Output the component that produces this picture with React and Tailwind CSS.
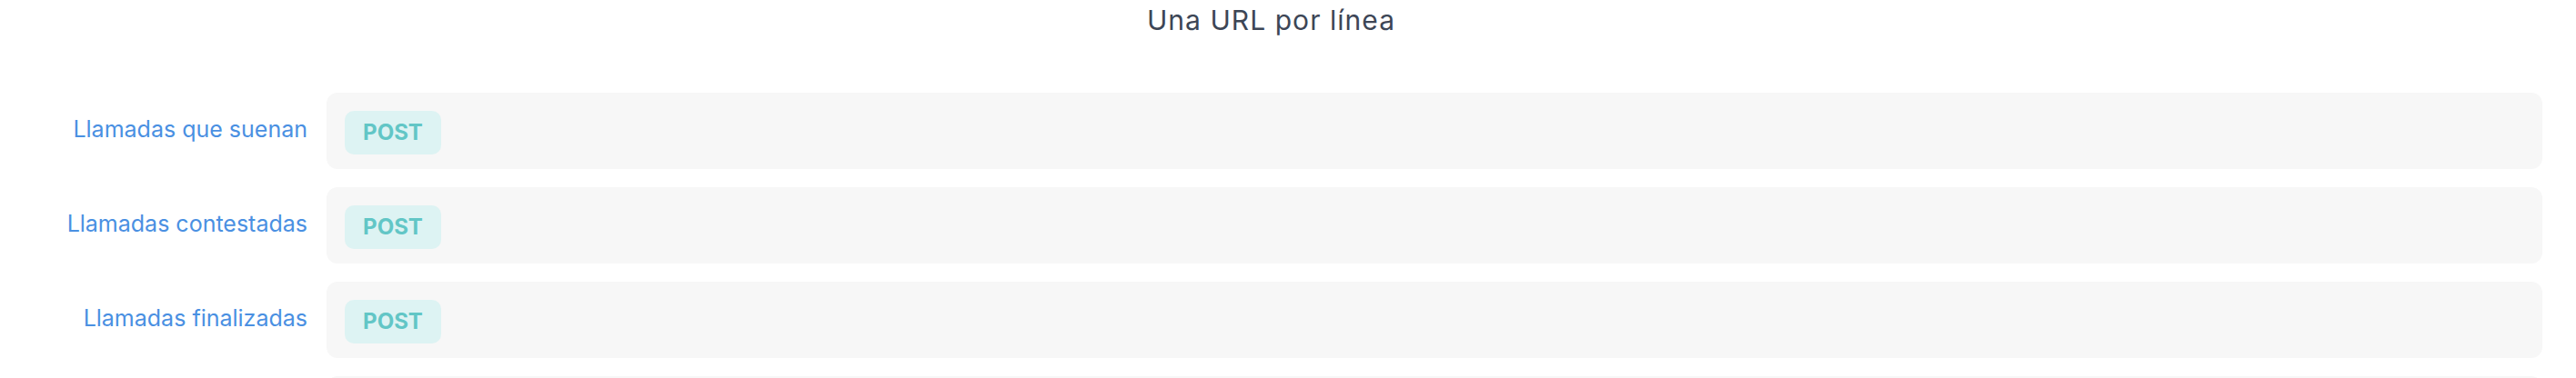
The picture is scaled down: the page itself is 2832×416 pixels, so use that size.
import React from 'react'

const hooks = [
  { label: 'Llamadas que suenan', method: 'POST' },
  { label: 'Llamadas contestadas', method: 'POST' },
  { label: 'Llamadas finalizadas', method: 'POST' }
]

function HookRow({ label, method }) {
  return (
    <div className="flex items-start gap-[21px]">
      <div className="w-[338px] shrink-0 pt-[24px] text-right text-[25px] leading-[32px] text-[#4a90e2]">
        {label}
      </div>
      <div className="flex h-[84px] flex-1 items-start rounded-[12px] bg-[#f7f7f7] pl-[20px] pt-[20px]">
        {method && (
          <span className="flex h-[48px] w-[106px] items-center justify-center rounded-[10px] bg-[#ddf3f3] text-[24px] font-bold text-[#62c6c6]">
            {method}
          </span>
        )}
      </div>
    </div>
  )
}

export default function App() {
  return (
    <div className="min-h-screen bg-white font-['Inter','Noto_Sans',sans-serif]">
      <div className="w-[2795px]">
        <h2 className="pt-[4px] text-center text-[30px] leading-[36px] font-normal tracking-[0.035em] text-[#3d4656]">
          Una URL por línea
        </h2>
        <div className="mt-[62px] flex flex-col gap-[20px]">
          {hooks.map((h) => (
            <HookRow key={h.label} {...h} />
          ))}
          <div className="flex gap-[21px]">
            <div className="w-[338px] shrink-0" />
            <div className="h-[84px] flex-1 rounded-[12px] bg-[#f7f7f7]" />
          </div>
        </div>
      </div>
    </div>
  )
}
